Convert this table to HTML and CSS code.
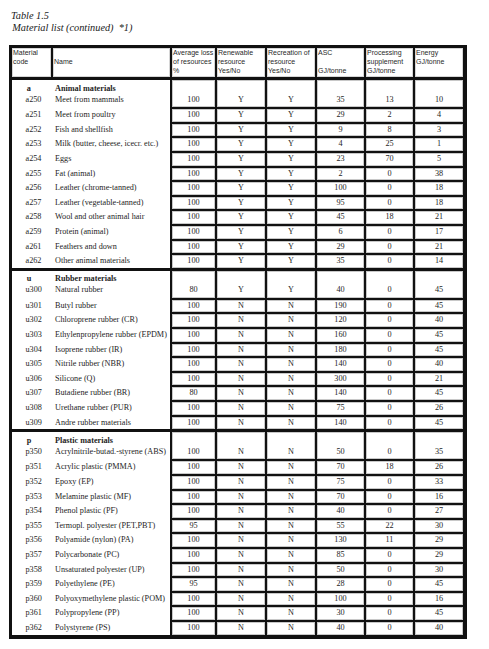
FILE: index.html
```html
<!DOCTYPE html>
<html>
<head>
<meta charset="utf-8">
<link rel="stylesheet" href="styles.css">
</head>
<body>
<div class="page">
  <div class="cap">
    <div>Table 1.5</div>
    <div class="sub">Material list (continued)&nbsp; *1)</div>
  </div>
  <div class="tbl">
    <div class="head">
      <div class="h">Material<br>code</div>
      <div class="h"><br>Name</div>
      <div class="h">Average loss<br>of resources<br>%</div>
      <div class="h">Renewable<br>resource<br>Yes/No</div>
      <div class="h">Recreation of<br>resource<br>Yes/No</div>
      <div class="h">ASC<br><br>GJ/tonne</div>
      <div class="h">Processing<br>supplement<br>GJ/tonne</div>
      <div class="h">Energy<br>GJ/tonne</div>
    </div>

    <div class="sec rows13">
      <div class="left">
        <div class="grp">
          <div class="ln"><span class="code gl">a</span><span class="name b">Animal materials</span></div>
          <div class="ln"><span class="code">a250</span><span class="name">Meet from mammals</span></div>
        </div>
        <div class="row"><span class="code">a251</span><span class="name">Meet from poultry</span></div>
        <div class="row"><span class="code">a252</span><span class="name">Fish and shellfish</span></div>
        <div class="row"><span class="code">a253</span><span class="name">Milk (butter, cheese, icecr. etc.)</span></div>
        <div class="row"><span class="code">a254</span><span class="name">Eggs</span></div>
        <div class="row"><span class="code">a255</span><span class="name">Fat (animal)</span></div>
        <div class="row"><span class="code">a256</span><span class="name">Leather (chrome-tanned)</span></div>
        <div class="row"><span class="code">a257</span><span class="name">Leather (vegetable-tanned)</span></div>
        <div class="row"><span class="code">a258</span><span class="name">Wool and other animal hair</span></div>
        <div class="row"><span class="code">a259</span><span class="name">Protein (animal)</span></div>
        <div class="row"><span class="code">a261</span><span class="name">Feathers and down</span></div>
        <div class="row"><span class="code">a262</span><span class="name">Other animal materials</span></div>
      </div>
      <div class="c first">100</div><div class="c first">Y</div><div class="c first">Y</div><div class="c first">35</div><div class="c first">13</div><div class="c first">10</div>
      <div class="c">100</div><div class="c">Y</div><div class="c">Y</div><div class="c">29</div><div class="c">2</div><div class="c">4</div>
      <div class="c">100</div><div class="c">Y</div><div class="c">Y</div><div class="c">9</div><div class="c">8</div><div class="c">3</div>
      <div class="c">100</div><div class="c">Y</div><div class="c">Y</div><div class="c">4</div><div class="c">25</div><div class="c">1</div>
      <div class="c">100</div><div class="c">Y</div><div class="c">Y</div><div class="c">23</div><div class="c">70</div><div class="c">5</div>
      <div class="c">100</div><div class="c">Y</div><div class="c">Y</div><div class="c">2</div><div class="c">0</div><div class="c">38</div>
      <div class="c">100</div><div class="c">Y</div><div class="c">Y</div><div class="c">100</div><div class="c">0</div><div class="c">18</div>
      <div class="c">100</div><div class="c">Y</div><div class="c">Y</div><div class="c">95</div><div class="c">0</div><div class="c">18</div>
      <div class="c">100</div><div class="c">Y</div><div class="c">Y</div><div class="c">45</div><div class="c">18</div><div class="c">21</div>
      <div class="c">100</div><div class="c">Y</div><div class="c">Y</div><div class="c">6</div><div class="c">0</div><div class="c">17</div>
      <div class="c">100</div><div class="c">Y</div><div class="c">Y</div><div class="c">29</div><div class="c">0</div><div class="c">21</div>
      <div class="c">100</div><div class="c">Y</div><div class="c">Y</div><div class="c">35</div><div class="c">0</div><div class="c">14</div>
    </div>

    <div class="sec rows11">
      <div class="left">
        <div class="grp">
          <div class="ln"><span class="code gl">u</span><span class="name b">Rubber materials</span></div>
          <div class="ln"><span class="code">u300</span><span class="name">Natural rubber</span></div>
        </div>
        <div class="row"><span class="code">u301</span><span class="name">Butyl rubber</span></div>
        <div class="row"><span class="code">u302</span><span class="name">Chloroprene rubber (CR)</span></div>
        <div class="row"><span class="code">u303</span><span class="name">Ethylenpropylene rubber (EPDM)</span></div>
        <div class="row"><span class="code">u304</span><span class="name">Isoprene rubber (IR)</span></div>
        <div class="row"><span class="code">u305</span><span class="name">Nitrile rubber (NBR)</span></div>
        <div class="row"><span class="code">u306</span><span class="name">Silicone (Q)</span></div>
        <div class="row"><span class="code">u307</span><span class="name">Butadiene rubber (BR)</span></div>
        <div class="row"><span class="code">u308</span><span class="name">Urethane rubber (PUR)</span></div>
        <div class="row"><span class="code">u309</span><span class="name">Andre rubber materials</span></div>
      </div>
      <div class="c first">80</div><div class="c first">Y</div><div class="c first">Y</div><div class="c first">40</div><div class="c first">0</div><div class="c first">45</div>
      <div class="c">100</div><div class="c">N</div><div class="c">N</div><div class="c">190</div><div class="c">0</div><div class="c">45</div>
      <div class="c">100</div><div class="c">N</div><div class="c">N</div><div class="c">120</div><div class="c">0</div><div class="c">40</div>
      <div class="c">100</div><div class="c">N</div><div class="c">N</div><div class="c">160</div><div class="c">0</div><div class="c">45</div>
      <div class="c">100</div><div class="c">N</div><div class="c">N</div><div class="c">180</div><div class="c">0</div><div class="c">45</div>
      <div class="c">100</div><div class="c">N</div><div class="c">N</div><div class="c">140</div><div class="c">0</div><div class="c">40</div>
      <div class="c">100</div><div class="c">N</div><div class="c">N</div><div class="c">300</div><div class="c">0</div><div class="c">21</div>
      <div class="c">80</div><div class="c">N</div><div class="c">N</div><div class="c">140</div><div class="c">0</div><div class="c">45</div>
      <div class="c">100</div><div class="c">N</div><div class="c">N</div><div class="c">75</div><div class="c">0</div><div class="c">26</div>
      <div class="c">100</div><div class="c">N</div><div class="c">N</div><div class="c">140</div><div class="c">0</div><div class="c">45</div>
    </div>

    <div class="sec rows14">
      <div class="left">
        <div class="grp">
          <div class="ln"><span class="code gl">p</span><span class="name b">Plastic materials</span></div>
          <div class="ln"><span class="code">p350</span><span class="name">Acrylnitrile-butad.-styrene (ABS)</span></div>
        </div>
        <div class="row"><span class="code">p351</span><span class="name">Acrylic plastic (PMMA)</span></div>
        <div class="row"><span class="code">p352</span><span class="name">Epoxy (EP)</span></div>
        <div class="row"><span class="code">p353</span><span class="name">Melamine plastic (MF)</span></div>
        <div class="row"><span class="code">p354</span><span class="name">Phenol plastic (PF)</span></div>
        <div class="row"><span class="code">p355</span><span class="name">Termopl. polyester (PET,PBT)</span></div>
        <div class="row"><span class="code">p356</span><span class="name">Polyamide (nylon) (PA)</span></div>
        <div class="row"><span class="code">p357</span><span class="name">Polycarbonate (PC)</span></div>
        <div class="row"><span class="code">p358</span><span class="name">Unsaturated polyester (UP)</span></div>
        <div class="row"><span class="code">p359</span><span class="name">Polyethylene (PE)</span></div>
        <div class="row"><span class="code">p360</span><span class="name">Polyoxymethylene plastic (POM)</span></div>
        <div class="row"><span class="code">p361</span><span class="name">Polypropylene (PP)</span></div>
        <div class="row"><span class="code">p362</span><span class="name">Polystyrene (PS)</span></div>
      </div>
      <div class="c first">100</div><div class="c first">N</div><div class="c first">N</div><div class="c first">50</div><div class="c first">0</div><div class="c first">35</div>
      <div class="c">100</div><div class="c">N</div><div class="c">N</div><div class="c">70</div><div class="c">18</div><div class="c">26</div>
      <div class="c">100</div><div class="c">N</div><div class="c">N</div><div class="c">75</div><div class="c">0</div><div class="c">33</div>
      <div class="c">100</div><div class="c">N</div><div class="c">N</div><div class="c">70</div><div class="c">0</div><div class="c">16</div>
      <div class="c">100</div><div class="c">N</div><div class="c">N</div><div class="c">40</div><div class="c">0</div><div class="c">27</div>
      <div class="c">95</div><div class="c">N</div><div class="c">N</div><div class="c">55</div><div class="c">22</div><div class="c">30</div>
      <div class="c">100</div><div class="c">N</div><div class="c">N</div><div class="c">130</div><div class="c">11</div><div class="c">29</div>
      <div class="c">100</div><div class="c">N</div><div class="c">N</div><div class="c">85</div><div class="c">0</div><div class="c">29</div>
      <div class="c">100</div><div class="c">N</div><div class="c">N</div><div class="c">50</div><div class="c">0</div><div class="c">30</div>
      <div class="c">95</div><div class="c">N</div><div class="c">N</div><div class="c">28</div><div class="c">0</div><div class="c">45</div>
      <div class="c">100</div><div class="c">N</div><div class="c">N</div><div class="c">100</div><div class="c">0</div><div class="c">16</div>
      <div class="c">100</div><div class="c">N</div><div class="c">N</div><div class="c">30</div><div class="c">0</div><div class="c">45</div>
      <div class="c">100</div><div class="c">N</div><div class="c">N</div><div class="c">40</div><div class="c">0</div><div class="c">40</div>
    </div>
  </div>
</div>
</body>
</html>
```
FILE: styles.css
```css
html, body {
  margin: 0;
  padding: 0;
  background: #fff;
}

.page {
  padding-top: 10.3px;
  padding-left: 9px;
}

.cap {
  margin: 0 0 11.7px 2px;
  font: italic 10.3px/11.5px "Liberation Serif", serif;
  color: #1a1a1a;
}

.cap .sub {
  padding-left: 1.3px;
}

.tbl {
  width: 458px;
  box-sizing: border-box;
  background: #111;
  padding: 3px 4px 4px 3px;
  display: flex;
  flex-direction: column;
  gap: 3px;
}

.head,
.sec {
  display: grid;
  grid-template-columns: 39px 117px 43px 48px 48px 47px 47px 48px;
  gap: 2px;
}

.head {
  height: 29px;
}

.h {
  background: #fff;
  font: 7px/9px "Liberation Sans", Arial, sans-serif;
  color: #2a2a2a;
  padding-left: 1px;
  white-space: nowrap;
  box-shadow: inset 0 0 0 1px #d6d6d6;
}

.rows13 { grid-template-rows: repeat(13, 12.6px); }
.rows11 { grid-template-rows: repeat(11, 12.6px); }
.rows14 { grid-template-rows: repeat(14, 12.6px); }

.sec {
  font: 8.2px "Liberation Serif", "Times New Roman", serif;
  color: #1e1e1e;
}

.left {
  grid-column: 1 / span 2;
  grid-row: 1 / -1;
  background: #fff;
  overflow: hidden;
}

.grp {
  height: 29.2px;
  box-sizing: border-box;
  padding-top: 2.7px;
  line-height: 11px;
}

.row {
  height: 14.6px;
  line-height: 12.6px;
}

.ln,
.row {
  display: flex;
  white-space: nowrap;
}

.code {
  flex: 0 0 41px;
  box-sizing: border-box;
  padding-left: 13.5px;
}

.code.gl {
  padding-left: 14.8px;
  font-weight: bold;
}

.name {
  padding-left: 2px;
}

.name.b {
  font-weight: bold;
}

.c {
  background: #fff;
  text-align: center;
  line-height: 12.6px;
  box-shadow: inset 0 0 0 1px #c8c8c8;
}

.c.first {
  grid-row: span 2;
  padding-top: 13.7px;
  line-height: 11px;
}
```
